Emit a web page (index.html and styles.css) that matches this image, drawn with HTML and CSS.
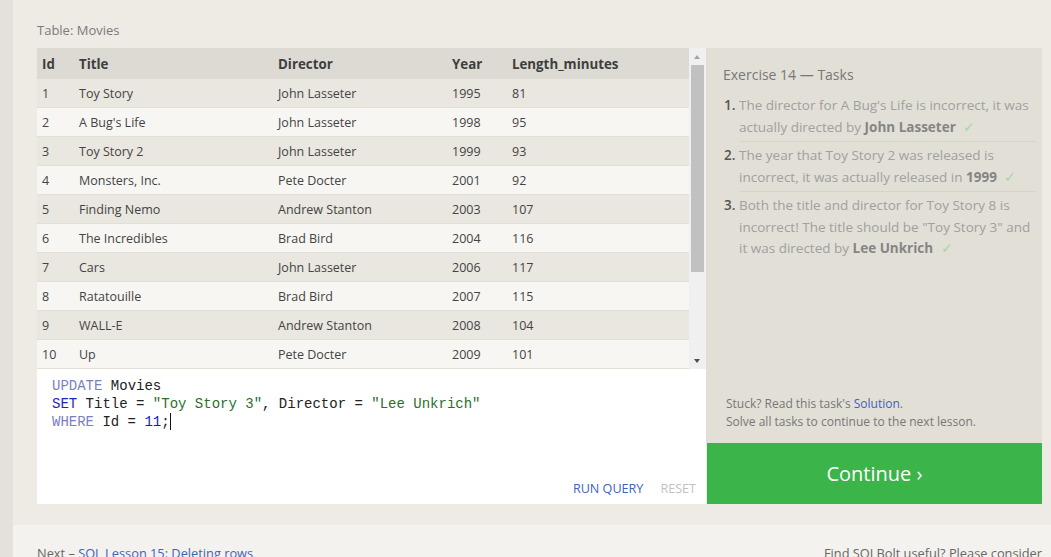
FILE: index.html
```html
<!DOCTYPE html>
<html>
<head>
<meta charset="utf-8">
<link rel="stylesheet" href="styles.css">
</head>
<body>
<div class="page">
  <div class="strip"></div>
  <div class="main">
    <div class="content">
      <div class="table-label">Table: Movies</div>
      <div class="workspace">
        <div class="left">
          <div class="table-wrap">
            <div class="table-scroll">
              <table class="movies">
                <thead>
                  <tr><th class="c-id">Id</th><th class="c-title">Title</th><th class="c-dir">Director</th><th class="c-year">Year</th><th class="c-len">Length_minutes</th></tr>
                </thead>
                <tbody>
                  <tr><td>1</td><td>Toy Story</td><td>John Lasseter</td><td>1995</td><td>81</td></tr>
                  <tr><td>2</td><td>A Bug's Life</td><td>John Lasseter</td><td>1998</td><td>95</td></tr>
                  <tr><td>3</td><td>Toy Story 2</td><td>John Lasseter</td><td>1999</td><td>93</td></tr>
                  <tr><td>4</td><td>Monsters, Inc.</td><td>Pete Docter</td><td>2001</td><td>92</td></tr>
                  <tr><td>5</td><td>Finding Nemo</td><td>Andrew Stanton</td><td>2003</td><td>107</td></tr>
                  <tr><td>6</td><td>The Incredibles</td><td>Brad Bird</td><td>2004</td><td>116</td></tr>
                  <tr><td>7</td><td>Cars</td><td>John Lasseter</td><td>2006</td><td>117</td></tr>
                  <tr><td>8</td><td>Ratatouille</td><td>Brad Bird</td><td>2007</td><td>115</td></tr>
                  <tr><td>9</td><td>WALL-E</td><td>Andrew Stanton</td><td>2008</td><td>104</td></tr>
                  <tr><td>10</td><td>Up</td><td>Pete Docter</td><td>2009</td><td>101</td></tr>
                </tbody>
              </table>
            </div>
            <div class="scrollbar">
              <div class="arrow up"></div>
              <div class="track"><div class="thumb"></div></div>
              <div class="arrow down"></div>
            </div>
          </div>
          <div class="editor">
            <div class="code"><span class="kw">UPDATE</span> Movies
<span class="kw2">SET</span> Title = <span class="str">"Toy Story 3"</span>, Director = <span class="str">"Lee Unkrich"</span>
<span class="kw">WHERE</span> Id = <span class="num">11</span>;<span class="cursor"></span></div>
            <div class="actions"><span class="run">RUN QUERY</span><span class="reset">RESET</span></div>
          </div>
        </div>
        <div class="right">
          <div class="tasks">
            <div class="tasks-title">Exercise 14 — Tasks</div>
            <ol class="task-list">
              <li>The director for A Bug's Life is incorrect, it was actually directed by <b>John Lasseter</b> <span class="check">✓</span></li>
              <li>The year that Toy Story 2 was released is incorrect, it was actually released in <b>1999</b> <span class="check">✓</span></li>
              <li class="last">Both the title and director for Toy Story 8 is incorrect! The title should be "Toy Story 3" and it was directed by <b>Lee Unkrich</b> <span class="check">✓</span></li>
            </ol>
            <div class="stuck">
              <div>Stuck? Read this task's <span class="link">Solution</span>.</div>
              <div>Solve all tasks to continue to the next lesson.</div>
            </div>
          </div>
          <div class="continue">Continue ›</div>
        </div>
      </div>
    </div>
    <div class="footer">
      <div class="next">Next – <span class="link">SQL Lesson 15: Deleting rows</span></div>
      <div class="useful">Find SQLBolt useful? Please consider</div>
    </div>
  </div>
</div>
</body>
</html>
```

FILE: styles.css
```css
html, body {
  margin: 0;
  padding: 0;
  height: 100%;
  overflow: hidden;
}
body {
  font-family: "Open Sans", "Noto Sans", sans-serif;
  background: #eeebe5;
  color: #555;
}
.page {
  display: flex;
  height: 557px;
}
.strip {
  width: 13px;
  flex: none;
  background: #e4e1dc;
}
.main {
  flex: 1;
  display: flex;
  flex-direction: column;
  background: #eeebe5;
}
.content {
  padding: 21px 0 0 24px;
  height: 508px;
  box-sizing: border-box;
}
.table-label {
  font-size: 13px;
  color: #7a7a7a;
  line-height: 19px;
  margin-bottom: 8px;
}
.workspace {
  display: flex;
}
.left {
  width: 669px;
  display: flex;
  flex-direction: column;
}
.table-wrap {
  display: flex;
  height: 321px;
}
.table-scroll {
  width: 652px;
  overflow: hidden;
}
.movies {
  width: 100%;
  border-collapse: collapse;
  font-size: 12.5px;
  color: #444;
}
.movies th {
  background: #dcdad2;
  text-align: left;
  font-weight: 700;
  font-size: 13.3px;
  color: #3e3e3e;
  height: 31px;
  padding: 0 0 0 5px;
}
.movies td {
  height: 28px;
  padding: 0 0 0 5px;
  border-bottom: 1px solid #e2dfd7;
}
.movies tbody tr:nth-child(odd) td { background: #e9e7df; }
.movies tbody tr:nth-child(even) td { background: #f7f6f3; }
.c-id { width: 32px; }
.c-title { width: 194px; }
.c-dir { width: 169px; }
.c-year { width: 55px; }
.scrollbar {
  width: 17px;
  background: #f0f0f0;
  display: flex;
  flex-direction: column;
}
.scrollbar .arrow {
  height: 17px;
  position: relative;
}
.scrollbar .arrow::after {
  content: "";
  position: absolute;
  left: 5px;
  width: 0;
  height: 0;
  border-left: 3.5px solid transparent;
  border-right: 3.5px solid transparent;
}
.scrollbar .up::after { top: 7px; border-bottom: 4px solid #a3a3a3; }
.scrollbar .down::after { top: 7px; border-top: 4px solid #505050; }
.scrollbar .track {
  flex: 1;
  padding: 0 2px;
}
.scrollbar .thumb {
  height: 207px;
  background: #c1c1c1;
}
.editor {
  background: #fff;
  height: 135px;
  display: flex;
  flex-direction: column;
}
.code {
  flex: 1;
  font-family: "Liberation Mono", "DejaVu Sans Mono", monospace;
  font-size: 14px;
  line-height: 18px;
  padding: 8px 15px 0;
  white-space: pre;
  color: #222;
}
.kw { color: #7a7fc2; }
.kw2 { color: #2323c4; }
.str { color: #2b6f2b; }
.num { color: #1a1aa6; }
.cursor {
  display: inline-block;
  width: 1px;
  height: 17px;
  background: #111;
  vertical-align: -4px;
}
.actions {
  display: flex;
  justify-content: flex-end;
  gap: 17px;
  padding: 0 10px 7px 0;
  font-size: 12.6px;
  line-height: 16px;
}
.run { color: #3d63bd; }
.reset { color: #c2c2c2; }
.right {
  width: 336px;
  display: flex;
  flex-direction: column;
}
.tasks {
  background: #e2dfd6;
  height: 395px;
  box-sizing: border-box;
  padding: 16px 6px 0 17px;
  display: flex;
  flex-direction: column;
}
.tasks-title {
  font-size: 14px;
  color: #777;
  line-height: 22px;
  margin-bottom: 9px;
}
.task-list {
  margin: 0;
  padding: 0 0 0 16px;
  font-size: 13.5px;
  line-height: 21.5px;
  color: #a0a0a0;
}
.task-list li {
  padding: 0 0 3px;
  margin-bottom: 3px;
  border-bottom: 1px solid #d6d3ca;
}
.task-list li.last { border-bottom: none; }
.task-list li::marker {
  color: #555;
  font-weight: 600;
}
.task-list b {
  color: #858585;
  font-weight: 700;
}
.check {
  color: #a7d6a3;
  margin-left: 4px;
}
.stuck {
  margin-top: auto;
  padding: 0 0 12px 3px;
  font-size: 12px;
  line-height: 18px;
  color: #777;
}
.link { color: #3d63bd; }
.continue {
  background: #3bb54a;
  height: 61px;
  margin-left: 1px;
  color: #fff;
  font-size: 20px;
  display: flex;
  align-items: center;
  justify-content: center;
}
.footer {
  flex: 1;
  background: #f4f2ee;
  margin-top: 21px;
  display: flex;
  justify-content: space-between;
  padding: 19px 9px 0 24px;
  font-size: 12.8px;
  color: #666;
}
```
